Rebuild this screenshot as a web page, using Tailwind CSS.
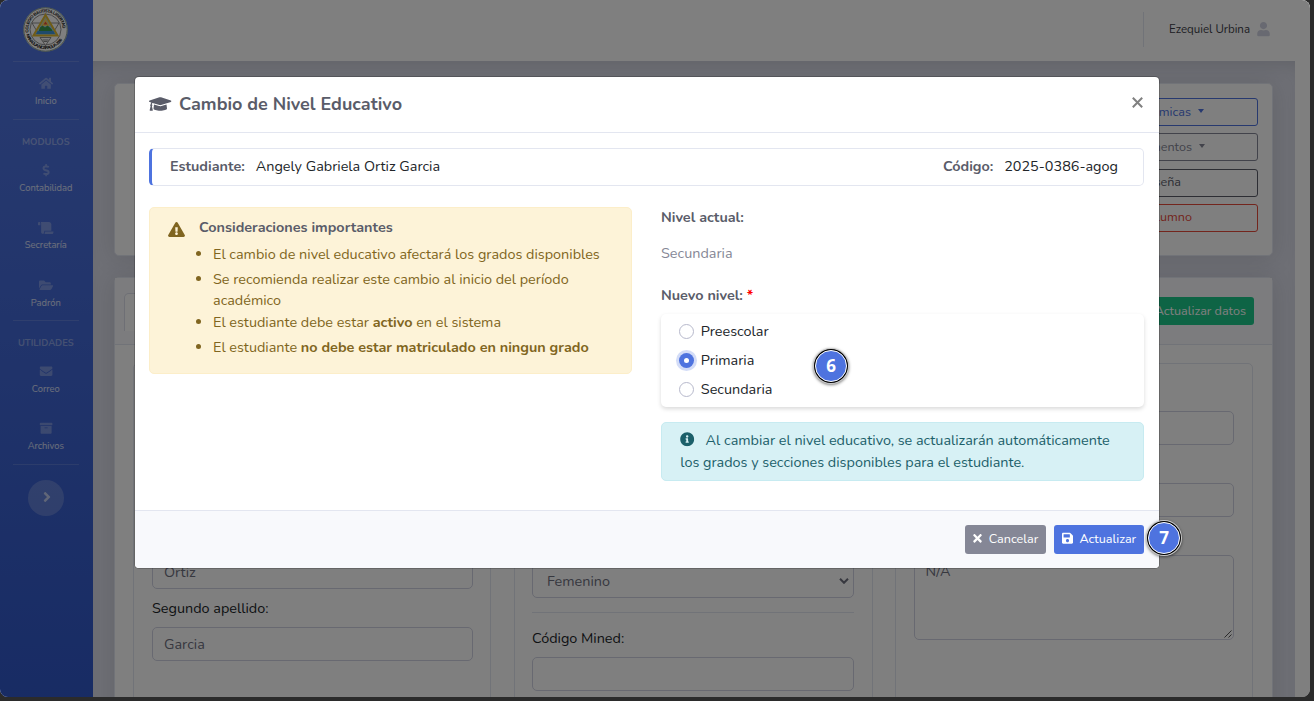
<!DOCTYPE html>
<html lang="es">
<head>
<meta charset="utf-8">
<title>Cambio de Nivel Educativo</title>
<script src="https://cdn.jsdelivr.net/npm/@tailwindcss/browser@4"></script>
</head>
<body class="h-[701px] w-[1314px] overflow-hidden bg-[#2b2b2b] font-['Nunito',sans-serif] text-[14.4px] leading-[21.6px] text-[#858796]">
<svg class="hidden">
  <symbol id="cap" viewBox="0 0 640 512"><path d="M622.34 153.2L343.4 67.5c-15.2-4.67-31.6-4.67-46.79 0L17.66 153.2c-23.54 7.23-23.54 38.36 0 45.59l48.63 14.94c-10.67 13.19-17.23 29.28-17.88 46.9C38.78 266.15 32 276.11 32 288c0 10.78 5.68 19.85 13.86 25.65L20.33 428.53C18.11 438.52 25.71 448 35.94 448h56.11c10.24 0 17.84-9.48 15.62-19.47L82.14 313.65C90.32 307.85 96 298.78 96 288c0-11.57-6.47-21.25-15.66-26.87.76-15.02 8.44-28.3 20.69-36.72L296.6 284.5c9.06 2.78 26.44 6.25 46.79 0l278.95-85.7c23.55-7.24 23.55-38.36 0-45.6zM352.79 315.09c-28.53 8.76-52.84 3.92-65.59 0l-145.02-44.55L128 384c0 35.35 85.96 64 192 64s192-28.65 192-64l-14.18-113.47-145.03 44.56z"/></symbol>
  <symbol id="warn" viewBox="0 0 576 512"><path d="M569.517 440.013C587.975 472.007 564.806 512 527.94 512H48.054c-36.937 0-59.999-40.055-41.577-71.987L246.423 23.985c18.467-32.009 64.72-31.951 83.154 0l239.94 416.028zM288 354c-25.405 0-46 20.595-46 46s20.595 46 46 46 46-20.595 46-46-20.595-46-46-46zm-43.673-165.346l7.418 136c.347 6.364 5.609 11.346 11.982 11.346h48.546c6.373 0 11.635-4.982 11.982-11.346l7.418-136c.375-6.874-5.098-12.654-11.982-12.654h-63.383c-6.884 0-12.356 5.78-11.981 12.654z"/></symbol>
  <symbol id="info" viewBox="0 0 512 512"><path d="M256 8C119.043 8 8 119.083 8 256c0 136.997 111.043 248 248 248s248-111.003 248-248C504 119.083 392.957 8 256 8zm0 110c23.196 0 42 18.804 42 42s-18.804 42-42 42-42-18.804-42-42 18.804-42 42-42zm56 254c0 6.627-5.373 12-12 12h-88c-6.627 0-12-5.373-12-12v-24c0-6.627 5.373-12 12-12h12v-64h-12c-6.627 0-12-5.373-12-12v-24c0-6.627 5.373-12 12-12h64c6.627 0 12 5.373 12 12v100h12c6.627 0 12 5.373 12 12v24z"/></symbol>
  <symbol id="times" viewBox="0 0 352 512"><path d="M242.72 256l100.07-100.07c12.28-12.28 12.28-32.19 0-44.48l-22.24-22.24c-12.28-12.28-32.19-12.28-44.48 0L176 189.28 75.93 89.21c-12.28-12.28-32.19-12.28-44.48 0L9.21 111.45c-12.28 12.28-12.28 32.19 0 44.48L109.28 256 9.21 356.07c-12.28 12.28-12.28 32.19 0 44.48l22.24 22.24c12.28 12.28 32.2 12.28 44.48 0L176 322.72l100.07 100.07c12.28 12.28 32.2 12.28 44.48 0l22.24-22.24c12.28-12.28 12.28-32.19 0-44.48L242.72 256z"/></symbol>
  <symbol id="save" viewBox="0 0 448 512"><path d="M433.941 129.941l-83.882-83.882A48 48 0 0 0 316.118 32H48C21.49 32 0 53.49 0 80v352c0 26.51 21.49 48 48 48h352c26.51 0 48-21.49 48-48V163.882a48 48 0 0 0-14.059-33.941zM224 416c-35.346 0-64-28.654-64-64 0-35.346 28.654-64 64-64s64 28.654 64 64c0 35.346-28.654 64-64 64zm96-304.52V212c0 6.627-5.373 12-12 12H76c-6.627 0-12-5.373-12-12V108c0-6.627 5.373-12 12-12h228.52c3.183 0 6.235 1.264 8.485 3.515l3.48 3.48A11.996 11.996 0 0 1 320 111.48z"/></symbol>
  <symbol id="user" viewBox="0 0 448 512"><path d="M224 256c70.7 0 128-57.3 128-128S294.7 0 224 0 96 57.3 96 128s57.3 128 128 128zm89.6 32h-16.7c-22.2 10.2-46.9 16-72.9 16s-50.6-5.8-72.9-16h-16.7C60.2 288 0 348.2 0 422.4V464c0 26.5 21.5 48 48 48h352c26.5 0 48-21.5 48-48v-41.6c0-74.2-60.2-134.4-134.4-134.4z"/></symbol>
  <symbol id="home" viewBox="0 0 576 512"><path d="M280.37 148.26L96 300.11V464a16 16 0 0 0 16 16l112.06-.29a16 16 0 0 0 15.92-16V368a16 16 0 0 1 16-16h64a16 16 0 0 1 16 16v95.64a16 16 0 0 0 16 16.05L464 480a16 16 0 0 0 16-16V300L295.67 148.26a12.19 12.19 0 0 0-15.3 0zM571.6 251.47L488 182.56V44.05a12 12 0 0 0-12-12h-56a12 12 0 0 0-12 12v72.61L318.47 43a48 48 0 0 0-61 0L4.34 251.47a12 12 0 0 0-1.6 16.9l25.5 31A12 12 0 0 0 45.15 301l235.22-193.74a12.19 12.19 0 0 1 15.3 0L530.9 301a12 12 0 0 0 16.9-1.6l25.5-31a12 12 0 0 0-1.7-16.93z"/></symbol>
  <symbol id="dollar" viewBox="0 0 288 512"><path d="M209.2 233.4l-108-31.6C88.7 198.2 80 186.5 80 173.5c0-16.3 13.2-29.5 29.5-29.5h66.3c12.2 0 24.2 3.7 34.2 10.5 6.1 4.1 14.3 3.1 19.5-2l34.8-34c7.1-6.9 6.1-18.4-1.8-24.5C238 74.8 207.4 64.1 176 64V16c0-8.8-7.2-16-16-16h-32c-8.8 0-16 7.2-16 16v48h-2.5C45.8 64-5.4 118.7.5 183.6c4.2 46.1 39.4 83.6 83.8 96.6l102.5 30c12.5 3.7 21.2 15.3 21.2 28.3 0 16.3-13.2 29.5-29.5 29.5h-66.3C100 368 88 364.3 78 357.5c-6.1-4.1-14.3-3.1-19.5 2l-34.8 34c-7.1 6.9-6.1 18.4 1.8 24.5 24.5 19.2 55.1 29.9 86.5 30v48c0 8.8 7.2 16 16 16h32c8.8 0 16-7.2 16-16v-48.2c46.6-.9 90.3-28.6 105.7-72.7 21.5-61.6-14.6-124.8-72.5-141.7z"/></symbol>
  <symbol id="scroll" viewBox="0 0 640 512"><path d="M48 0C21.53 0 0 21.53 0 48v64c0 8.84 7.16 16 16 16h80V48C96 21.53 74.47 0 48 0zm208 412.57V352h288V96c0-52.94-43.06-96-96-96H111.59C121.74 13.41 128 29.92 128 48v368c0 38.87 34.65 69.65 74.75 63.12C234.22 474 256 444.46 256 412.57zM288 384v32c0 52.93-43.06 96-96 96h336c61.86 0 112-50.14 112-112 0-8.84-7.16-16-16-16H288z"/></symbol>
  <symbol id="folder" viewBox="0 0 576 512"><path d="M572.694 292.093L500.27 416.248A63.997 63.997 0 0 1 444.989 448H45.025c-18.523 0-30.064-20.093-20.731-36.093l72.424-124.155A64 64 0 0 1 152 256h399.964c18.523 0 30.064 20.093 20.73 36.093zM152 224h328v-48c0-26.51-21.49-48-48-48H272l-64-64H48C21.49 64 0 85.49 0 112v278.046l69.077-118.418C86.214 242.25 117.989 224 152 224z"/></symbol>
  <symbol id="mail" viewBox="0 0 512 512"><path d="M502.3 190.8c3.9-3.1 9.7-.2 9.7 4.7V400c0 26.5-21.5 48-48 48H48c-26.5 0-48-21.5-48-48V195.6c0-5 5.7-7.8 9.7-4.7 22.4 17.4 52.1 39.5 154.1 113.6 21.1 15.4 56.7 47.8 92.2 47.6 35.7.3 72-32.8 92.3-47.6 102-74.1 131.6-96.3 154-113.7zM256 320c23.2.4 56.6-29.2 73.4-41.4 132.7-96.3 142.8-104.7 173.4-128.7 5.8-4.5 9.2-11.5 9.2-18.9v-19c0-26.5-21.5-48-48-48H48c-26.5 0-48 21.5-48 48v19c0 7.4 3.4 14.3 9.2 18.9 30.6 23.9 40.7 32.4 173.4 128.7 16.8 12.2 50.2 41.8 73.4 41.4z"/></symbol>
  <symbol id="archive" viewBox="0 0 512 512"><path d="M32 448c0 17.7 14.3 32 32 32h384c17.7 0 32-14.3 32-32V160H32v288zm160-212c0-6.6 5.4-12 12-12h104c6.6 0 12 5.4 12 12v8c0 6.6-5.4 12-12 12H204c-6.6 0-12-5.4-12-12v-8zM480 32H32C14.3 32 0 46.3 0 64v48c0 8.8 7.2 16 16 16h480c8.8 0 16-7.2 16-16V64c0-17.7-14.3-32-32-32z"/></symbol>
  <symbol id="angle" viewBox="0 0 256 512"><path d="M224.3 273l-136 136c-9.4 9.4-24.6 9.4-33.9 0l-22.6-22.6c-9.4-9.4-9.4-24.6 0-33.9l96.4-96.4-96.4-96.4c-9.4-9.4-9.4-24.6 0-33.9L54.3 103c9.4-9.4 24.6-9.4 33.9 0l136 136c9.5 9.4 9.5 24.6.1 34z"/></symbol>
</svg>

<div class="relative flex h-[697px] w-[1310px] overflow-hidden rounded-lg bg-white">
  <!-- Sidebar -->
  <nav class="h-[980px] w-[93px] shrink-0 bg-linear-to-b from-[#4e73df] from-10% to-[#224abe] to-100% pl-[14px] pr-[15.4px] text-center text-[9.36px] leading-[14px] text-white/80">
    <div class="flex h-[61px] justify-center pt-[7px]">
      <svg class="size-[45px] shrink-0" viewBox="0 0 90 90">
        <circle cx="45" cy="45" r="44.5" fill="#fff"/><circle cx="45" cy="45" r="43.5" fill="none" stroke="#5b7a6a" stroke-width="1.5"/>
        <circle cx="45" cy="45" r="31" fill="#fff" stroke="#555" stroke-width="1.3"/>
        <path id="ringTop" d="M11 51A34.5 34.5 0 1 1 79 51" fill="none"/><path id="ringBottom" d="M6 53A40 40 0 0 0 84 53" fill="none"/>
        <g font-family="Liberation Sans" font-weight="bold" font-size="8.6" fill="#111"><text><textPath href="#ringTop" textLength="112">COLEGIO BAUTISTA LIBERTAD</textPath></text><text><textPath href="#ringBottom" startOffset="2" textLength="92">MANAGUA, NICARAGUA - 2000</textPath></text></g>
        <path d="M18 32H37L27 47ZM53 32H72L63 47ZM34 61H56L45 77Z" fill="#fff" stroke="#555" stroke-width="1.3"/>
        <path d="M45 16L69 57H21Z" fill="#9ccbe8" stroke="#e0b92e" stroke-width="4"/>
        <path d="M45 22L54 38H36Z" fill="#f0d060"/><path d="M45 29l4 6h-8z" fill="#e24b3b"/>
        <path d="M34 41l5-4 5 4 5-4 8 7 4 7H30Z" fill="#3a9a4c"/><path d="M29 48H61L64 54H26Z" fill="#3f97d8"/>
        <path d="M39 66h12M41 69h8" stroke="#444" stroke-width="1.3"/>
      </svg>
    </div>
    <div class="-mx-px h-[58px] border-t border-white/15 pt-[15px]"><svg class="mx-auto h-[12.6px] w-[14.2px] fill-white/30"><use href="#home"/></svg><p class="mt-[4px]">Inicio</p></div>
    <div class="-mx-px border-t border-white/15 pt-[15px] font-bold text-white/40">MODULOS</div>
    <div class="h-[57.5px] pt-[15px]"><svg class="mx-auto h-[12.6px] w-[14.2px] fill-white/30"><use href="#dollar"/></svg><p class="-mx-3 mt-[4px]">Contabilidad</p></div>
    <div class="h-[57.5px] pt-[15px]"><svg class="mx-auto h-[12.6px] w-[15.7px] fill-white/30"><use href="#scroll"/></svg><p class="mt-[4px]">Secretaría</p></div>
    <div class="h-[56px] pt-[15px]"><svg class="mx-auto h-[12.6px] w-[14.2px] fill-white/30"><use href="#folder"/></svg><p class="mt-[4px]">Padrón</p></div>
    <div class="-mx-px border-t border-white/15 pt-[15px] font-bold text-white/40">UTILIDADES</div>
    <div class="h-[57px] pt-[15px]"><svg class="mx-auto h-[12.6px] w-[14.2px] fill-white/30"><use href="#mail"/></svg><p class="mt-[4px]">Correo</p></div>
    <div class="h-[57px] pt-[15px]"><svg class="mx-auto h-[12.6px] w-[14.2px] fill-white/30"><use href="#archive"/></svg><p class="mt-[4px]">Archivos</p></div>
    <div class="-mx-px border-t border-white/15 pt-[15px]"><div class="mx-auto flex size-9 items-center justify-center rounded-full bg-white/20"><svg class="mb-[2px] ml-[2px] h-[16px] w-[8px] fill-white/60"><use href="#angle"/></svg></div></div>
  </nav>

  <div class="flex min-w-0 flex-1 flex-col">
    <!-- Top bar -->
    <header class="z-10 flex h-[61px] shrink-0 items-center justify-end bg-white pr-[40px] pb-[2px]">
      <div class="mr-[25px] h-[35px] w-px bg-[#e3e6f0]"></div>
      <span class="text-[11.52px] text-[#3a3b45]">Ezequiel Urbina</span>
      <svg class="ml-[7px] h-[14.4px] w-[13px] fill-[#d1d3e2]"><use href="#user"/></svg>
    </header>
    <main class="relative mr-[15px] h-[636px] overflow-hidden bg-[#dddfeb] pl-[21px] pr-[22px] pt-[22px] shadow-[inset_0_14px_20px_-12px_rgba(58,59,69,.18)]">
      <section class="flex h-[173px] justify-end rounded-[5px] border border-[#e3e6f0] bg-white pr-[14px] pt-[14px] shadow-[0_2px_25px_0_rgba(58,59,69,.15)]">
        <div class="flex w-[180px] flex-col gap-[7.4px] text-[12.6px] leading-[26px]">
          <div class="flex h-7 items-center justify-end gap-[7px] rounded-[3px] border border-[#4e73df] pr-[53px] whitespace-nowrap text-[#4e73df]">Académicas<i class="-mt-[3px] border-x-[3.5px] border-t-[4px] border-x-transparent border-t-[#4e73df]"></i></div>
          <div class="flex h-7 items-center justify-end gap-[7px] rounded-[3px] border border-[#858796] pr-[52px] text-[#858796]">Documentos<i class="-mt-[3px] border-x-[3.5px] border-t-[4px] border-x-transparent border-t-[#858796]"></i></div>
          <div class="h-7 rounded-[3px] border border-[#5a5c69] pr-[76px] text-right whitespace-nowrap text-[#5a5c69]"><span class="block -mt-px">Contraseña</span></div>
          <div class="h-7 rounded-[3px] border border-[#e74a3b] pr-[65px] text-right text-[#e74a3b]"><span class="block -mt-px">Eliminar alumno</span></div>
        </div>
      </section>
      <section class="mt-[21px] h-[500px] rounded-[5px] border border-[#e3e6f0] bg-white shadow-[0_2px_25px_0_rgba(58,59,69,.15)]">
        <div class="flex h-[67px] justify-between border-b border-[#e3e6f0] bg-[#f8f9fc] pl-[9px] pr-[18px]">
          <div class="mt-[15px] h-[38px] w-[120px] rounded-t-[5px] border border-b-0 border-[#dddfeb] bg-white"></div>
          <div class="mt-[19px] flex h-7 items-center rounded-[3px] bg-[#1cc88a] pl-7 pr-2 text-[12.6px] text-white">Actualizar datos</div>
        </div>
        <div class="grid grid-cols-[358px_359px_358px] gap-x-[22.5px] pl-[18px] pt-[18px] text-[#6e707e]">
          <div class="flex h-[400px] flex-col rounded-[5px] border border-[#e3e6f0] pl-[18px] pr-[17px] pt-[191px]">
            <div class="h-[34px] rounded-[5px] border border-[#d1d3e2] px-[11px] leading-[33px]">Ortiz</div>
            <div class="h-[38px] pt-[9px] text-[#212529]">Segundo apellido:</div>
            <div class="h-[34px] rounded-[5px] border border-[#d1d3e2] px-[11px] leading-[33px]">Garcia</div>
          </div>
          <div class="flex h-[400px] flex-col rounded-[5px] border border-[#e3e6f0] px-[17.5px] pt-[200px]">
            <div class="flex h-[34px] items-center justify-between rounded-[5px] border border-[#d1d3e2] pl-[14px] pr-[4px]"><span class="mt-px">Femenino</span><svg class="h-[6px] w-[10px]" viewBox="0 0 10 6" fill="none" stroke="#6e707e" stroke-width="2"><path d="M1 .8l4 4 4-4"/></svg></div>
            <div class="mt-[14px] border-t border-[#e3e6f0]"></div>
            <div class="h-[44px] pt-[15px] text-[#212529]">Código Mined:</div>
            <div class="h-[34px] rounded-[5px] border border-[#d1d3e2]"></div>
          </div>
          <div class="flex h-[400px] flex-col rounded-[5px] border border-[#e3e6f0] pl-[17.5px] pr-[18px] pt-[47px]">
            <div class="h-[34px] rounded-[5px] border border-[#d1d3e2]"></div>
            <div class="mt-[38px] h-[34px] rounded-[5px] border border-[#d1d3e2]"></div>
            <div class="relative mt-[38px] h-[85px] rounded-[5px] border border-[#d1d3e2] px-[11px] pt-[5px]">N/A<svg class="absolute right-px bottom-px size-[8px]" viewBox="0 0 8 8" stroke="#444" stroke-width=".9"><path d="M.5 7.5l7-7M4.5 7.5l3-3"/></svg></div>
          </div>
        </div>
      </section>
    </main>
  </div>
  <div class="absolute inset-0 z-20 bg-black/50"></div>
</div>

<!-- Dialog -->
<div class="absolute top-[77px] left-[135px] z-30 flex h-[491px] w-[1024px] flex-col rounded-[4px] bg-white shadow-[0_0_0_1px_rgba(0,0,0,.2)]">
  <div class="flex h-[56px] items-center justify-between border-b border-[#e3e6f0] pl-[14.4px] pr-[16px]">
    <h5 class="flex items-center gap-[7.2px] text-[18px] font-bold text-[#5a5c69]"><svg class="mb-[2px] h-[18px] w-[22.5px] fill-current"><use href="#cap"/></svg>Cambio de Nivel Educativo</h5>
    <svg class="mb-[5px] size-[11px]" viewBox="0 0 11 11" stroke="#808080" stroke-width="2"><path d="M.8 .8l9.4 9.4M10.2 .8l-9.4 9.4"/></svg>
  </div>
  <div class="flex h-[377px] flex-col px-[14px] pt-[15px] pr-[15px]">
    <div class="flex h-[38px] items-center justify-between rounded-[5px] border border-l-[3.6px] border-[#e3e6f0] border-l-[#4e73df] pl-[18px] pr-[25px] text-[#212529]">
      <div class="flex gap-[11px]"><b class="text-[#5a5c69]">Estudiante:</b><span>Angely Gabriela Ortiz Garcia</span></div>
      <div class="flex gap-[10.8px]"><b class="text-[#5a5c69]">Código:</b><span>2025-0386-agog</span></div>
    </div>
    <div class="mt-[21px] grid grid-cols-2 gap-x-[29px]">
      <div class="flex h-[167px] rounded-[5px] border border-[#fceec9] bg-[#fdf3d8] pl-[18px] pt-[9px] text-[#806520]">
        <svg class="mt-[5px] h-[15px] w-[17px] shrink-0 fill-current"><use href="#warn"/></svg>
        <div class="ml-[14px]">
          <h6 class="font-bold text-[#5a5c69]">Consideraciones importantes</h6>
          <ul class="mt-[5px] list-disc pl-[14px]">
            <li class="h-[25px]">El cambio de nivel educativo afectará los grados disponibles</li>
            <li class="h-[43px] w-[380px]">Se recomienda realizar este cambio al inicio del período académico</li>
            <li class="h-[25px]">El estudiante debe estar <b>activo</b> en el sistema</li>
            <li>El estudiante <b>no debe estar matriculado en ningun grado</b></li>
          </ul>
        </div>
      </div>
      <div>
        <p class="font-bold text-[#5a5c69]">Nivel actual:</p>
        <p class="mt-[14px]">Secundaria</p>
        <p class="mt-[21px] font-bold text-[#5a5c69]">Nuevo nivel: <span class="text-[#ff0000]">*</span></p>
        <div class="mt-[7px] flex h-[93px] flex-col gap-[7.4px] rounded-[5px] bg-white pl-[18px] pt-[7px] text-[#212529] shadow-[0_2px_4px_rgba(0,0,0,.15)]">
          <div class="flex items-center gap-[6.8px]"><i class="size-[15px] rounded-full border border-[#b7b9cc] bg-white"></i>Preescolar</div>
          <div class="flex items-center gap-[6.8px]"><i class="flex size-[15px] items-center justify-center rounded-full bg-[#4e73df] shadow-[0_0_0_3px_rgba(78,115,223,.25)]"><i class="size-[5.5px] rounded-full bg-white"></i></i>Primaria</div>
          <div class="flex items-center gap-[6.8px]"><i class="size-[15px] rounded-full border border-[#b7b9cc] bg-white"></i>Secundaria</div>
        </div>
        <div class="mt-[15px] h-[59px] rounded-[5px] border border-[#c7ebf1] bg-[#d7f1f5] pl-[18.2px] pt-[6px] leading-[22px] text-[#1c606a]"><svg class="mr-[11px] inline-block size-[14.4px] fill-current align-[-1.8px]"><use href="#info"/></svg>Al cambiar el nivel educativo, se actualizarán automáticamente<br>los grados y secciones disponibles para el estudiante.</div>
      </div>
    </div>
  </div>
  <div class="flex flex-1 justify-end gap-[8px] rounded-b-[4px] border-t border-[#e3e6f0] bg-[#f8f9fc] pr-[15px] pt-[14px] text-[12.6px] text-white">
    <div class="flex h-[29px] w-[81px] items-center rounded-[3px] bg-[#858796] pb-[2px] pl-[8px]"><svg class="mr-[6.8px] h-[12.6px] w-[9px] fill-current"><use href="#times"/></svg>Cancelar</div>
    <div class="flex h-[29px] w-[90px] items-center rounded-[3px] bg-[#4e73df] pb-[2px] pl-[7.6px]"><svg class="mr-[6.8px] h-[12.6px] w-[11px] fill-current"><use href="#save"/></svg>Actualizar</div>
  </div>
</div>

<!-- Step markers -->
<div class="absolute top-[348px] left-[813px] z-40 flex size-[36px] items-center justify-center rounded-full border border-white/80 bg-black shadow-[0_1px_3px_rgba(0,0,0,.5)]"><div class="flex size-[32px] items-center justify-center rounded-full border border-white bg-[#4e73df] font-['Open_Sans',sans-serif] text-[17px] font-bold text-white">6</div></div>
<div class="absolute top-[520px] left-[1146px] z-40 flex size-[36px] items-center justify-center rounded-full border border-white/80 bg-black shadow-[0_1px_3px_rgba(0,0,0,.5)]"><div class="flex size-[32px] items-center justify-center rounded-full border border-white bg-[#4e73df] font-['Open_Sans',sans-serif] text-[17px] font-bold text-white">7</div></div>
</body>
</html>
